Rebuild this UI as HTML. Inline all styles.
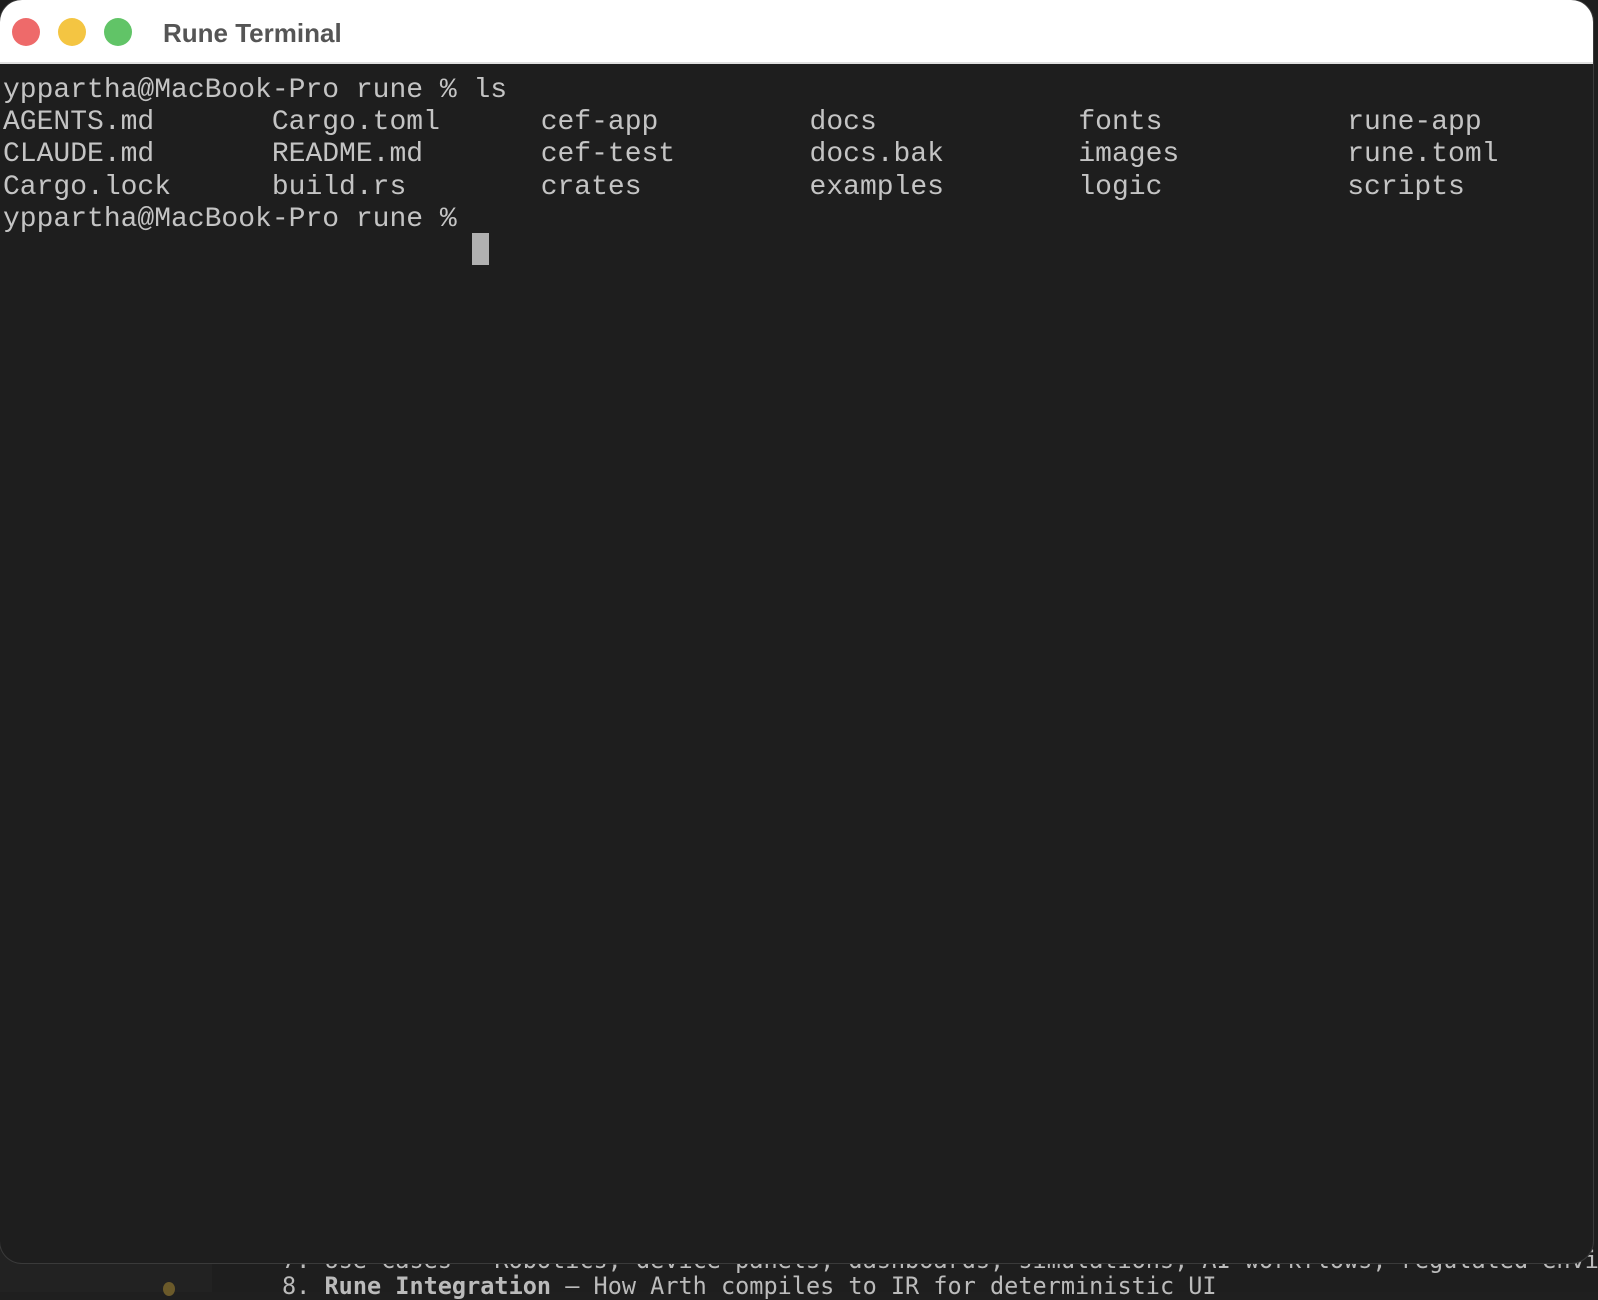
<!DOCTYPE html>
<html><head><meta charset="utf-8"><style>
html,body{margin:0;padding:0;width:1598px;height:1292px;overflow:hidden;background:#1f1f1f;}
.bg{position:absolute;left:0;top:0;width:1598px;height:1292px;background:#1e1e1e;}
.side{position:absolute;left:0;top:1230px;width:212px;height:62px;background:#222;}
.behind{position:absolute;left:282px;font-family:"DejaVu Sans Mono",monospace;font-size:24px;color:#bbb;white-space:pre;transform:scaleX(0.98);transform-origin:0 0;}
.win{position:absolute;left:0;top:0;width:1593px;height:1263px;background:#1e1e1e;border-radius:22px;overflow:hidden;box-shadow:0 0 0 1px #3a3a3a;}
.tb{position:absolute;left:0;top:0;width:100%;height:62px;background:#fff;border-bottom:2px solid #e0e0e0;}
.dot{position:absolute;top:18px;width:28px;height:28px;border-radius:50%;}
.title{position:absolute;left:163px;top:18px;font-family:"Liberation Sans",sans-serif;font-weight:bold;font-size:26px;color:#555;}
.term{position:absolute;left:3px;top:75px;font-family:"Liberation Mono",monospace;font-size:28px;line-height:32.2px;color:#c4c4c4;white-space:pre;}
.cur{position:absolute;left:472px;top:233px;width:17px;height:32px;background:#b0b0b0;}
</style></head><body>
<div class="bg"></div>
<div class="side"></div>
<div class="behind" style="top:1246px">7. Use Cases — Robotics, device panels, dashboards, simulations, AI workflows, regulated envir</div>
<div class="behind" style="top:1272px">8. <b>Rune Integration</b> — How Arth compiles to IR for deterministic UI</div>
<div style="position:absolute;left:163px;top:1282px;width:12px;height:14px;border-radius:50%;background:#6b5a2a;"></div>
<div class="win">
<div class="tb">
<div class="dot" style="left:12px;background:#ee6a6a;"></div>
<div class="dot" style="left:58px;background:#f4c542;"></div>
<div class="dot" style="left:104px;background:#61c467;"></div>
<div class="title">Rune Terminal</div>
</div>
<div class="term">yppartha@MacBook-Pro rune % ls
AGENTS.md       Cargo.toml      cef-app         docs            fonts           rune-app
CLAUDE.md       README.md       cef-test        docs.bak        images          rune.toml
Cargo.lock      build.rs        crates          examples        logic           scripts
yppartha@MacBook-Pro rune %</div>
<div class="cur"></div>
</div>
</body></html>
